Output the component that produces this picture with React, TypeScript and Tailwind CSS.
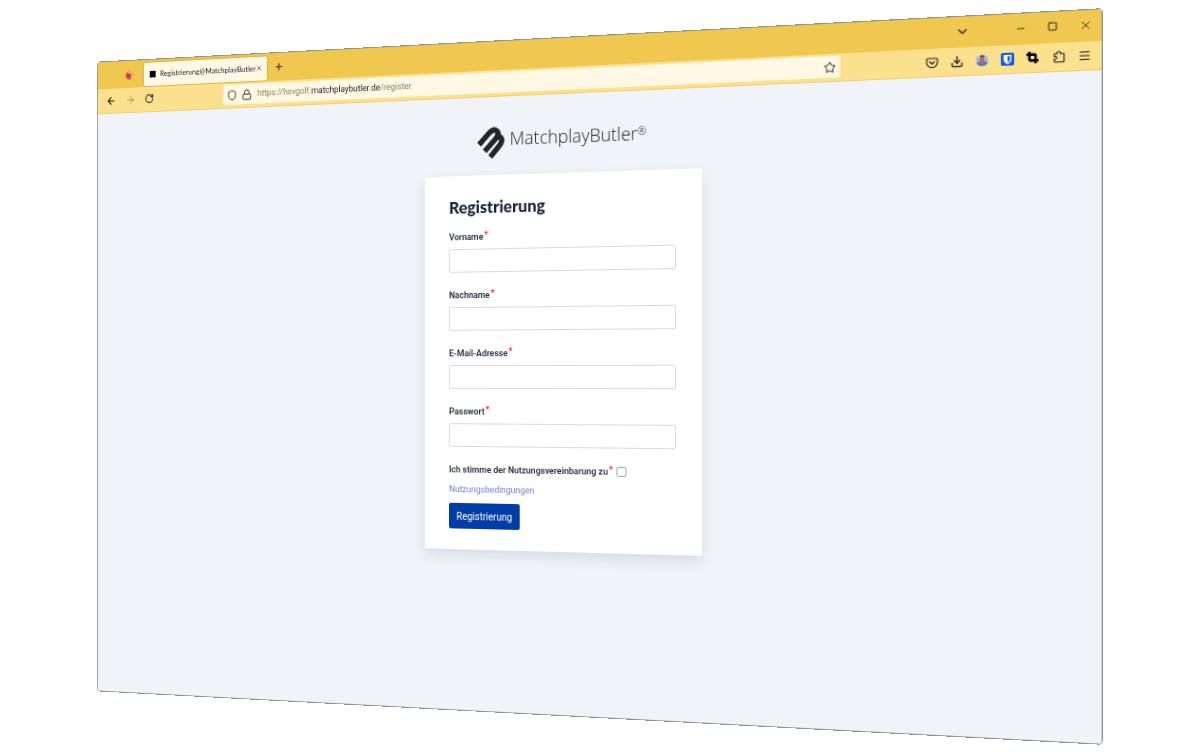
import { useState } from "react"
import type { ReactNode } from "react"
import { ArrowLeft, ArrowRight, ChevronDown, Crop, Download, Lock, Menu, Minus, Plus, RotateCw, Shield, Square, Star, X } from "lucide-react"
import { clsx } from "clsx"

type IconButtonProps = {
  label: string
  className?: string
  children: ReactNode
}

function IconButton({ label, className, children }: IconButtonProps) {
  return (
    <button type="button" aria-label={label} className={clsx("flex items-center justify-center shrink-0", className)}>
      {children}
    </button>
  )
}

function FirefoxIcon() {
  return (
    <svg viewBox="0 0 16 16" className="w-[10px] h-[10px]">
      <circle cx="8" cy="9" r="7" fill="#f5392f" />
      <path d="M3 4 C6 2 8 3 8 0 C12 2 15 5 15 9 C15 12 13 15 9 16 C12 11 10 6 3 4Z" fill="#ffb52e" />
      <path d="M1 8 C2 14 8 17 12 14 C8 15 5 13 4 9Z" fill="#f0307c" />
      <circle cx="8" cy="9" r="3" fill="#6a45d8" />
    </svg>
  )
}

function PocketIcon() {
  return (
    <svg viewBox="0 0 24 24" className="w-3 h-3" fill="none" stroke="currentColor" strokeWidth="2.2" strokeLinecap="round" strokeLinejoin="round">
      <path d="M4 4h16a2 2 0 0 1 2 2v5a10 10 0 0 1-20 0V6a2 2 0 0 1 2-2z" />
      <path d="M7.500 10l4.500 4.500L16.500 10" />
    </svg>
  )
}

function PuzzleIcon() {
  return (
    <svg viewBox="0 0 24 24" className="w-3 h-3" fill="none" stroke="currentColor" strokeWidth="2.2" strokeLinejoin="round">
      <path d="M9 6V5a3 3 0 0 1 6 0v1h5a1.500 1.500 0 0 1 1.500 1.500V20a1.500 1.500 0 0 1-1.500 1.500H5.500A1.500 1.500 0 0 1 4 20v-4h2a2.500 2.500 0 0 0 0-5H4V7.500A1.500 1.500 0 0 1 5.500 6z" />
    </svg>
  )
}

function AvatarIcon() {
  return (
    <svg viewBox="0 0 24 24" className="w-3 h-3">
      <circle cx="12" cy="12" r="11" fill="#9db7dc" />
      <path d="M2 17 C4 13 20 13 22 17 C19 24 5 24 2 17Z" fill="#4f78c4" />
      <path d="M8 8a4 4 0 0 1 8 0v5c0 4-2 6-4 7-2-1-4-3-4-7z" fill="#b56d5a" />
      <path d="M8 6a4 4 0 0 1 8 0z" fill="#6d4238" />
    </svg>
  )
}

function BitwardenIcon() {
  return (
    <svg viewBox="0 0 24 24" className="w-3 h-3">
      <rect x="0" y="0" width="24" height="24" rx="3" fill="#175ddc" />
      <path d="M5 4h14v8c0 4-3 7-7 9-4-2-7-5-7-9z" fill="#fff" />
      <path d="M12 6.500h4.500V12c0 3-2 4.500-4.500 6z" fill="#175ddc" />
    </svg>
  )
}

function ButlerMark() {
  return (
    <svg viewBox="0 0 83 92" className="w-[29px] h-8" fill="none" stroke="#20262b" strokeWidth="16" strokeLinejoin="round">
      <path d="M6 51 L35 20 C44 10 53 7 60 13 C67 20 64 27 57 35 L23 71" />
      <path d="M58 34 C65 27 72 30 74 36 C77 43 73 50 66 58 L40 88" />
    </svg>
  )
}

function TitleBar() {
  return (
    <div className="flex items-center h-[29px] bg-[#f0c850]">
      <div className="flex items-center justify-end w-[55px] pr-3">
        <FirefoxIcon />
      </div>
      <div className="flex items-center w-[143px] h-[25px] mt-px pl-[7px] pr-2 bg-[#fff8e4] rounded-xs shadow-[0_0_2px_#a07c1c]">
        <span className="w-[7px] h-[7px] mr-[5px] bg-black shrink-0" />
        <span className="flex-1 font-['Lato',sans-serif] text-[8px] text-[#1c1830] whitespace-nowrap">
          Registrierung@MatchplayButler
        </span>
        <IconButton label="Tab schließen">
          <X className="w-2 h-2" />
        </IconButton>
      </div>
      <IconButton label="Neuer Tab" className="w-[26px]">
        <Plus className="w-[11px] h-[11px]" strokeWidth={2.5} />
      </IconButton>
      <div className="flex items-center ml-auto pb-[2px]">
        <IconButton label="Alle Tabs auflisten" className="w-[29px] mr-6">
          <ChevronDown className="w-[14px] h-[14px]" />
        </IconButton>
        <IconButton label="Minimieren" className="w-[29px]">
          <Minus className="w-[10px] h-[10px]" />
        </IconButton>
        <IconButton label="Maximieren" className="w-[29px]">
          <Square className="w-[9px] h-[9px]" strokeWidth={2.5} />
        </IconButton>
        <IconButton label="Schließen" className="w-[29px]">
          <X className="w-3 h-3" strokeWidth={1.5} />
        </IconButton>
      </div>
    </div>
  )
}

function ToolBar() {
  return (
    <div className="flex items-center h-[27px] pl-1 pr-1 pb-px bg-[#fbe08e] border-b border-[#f3cf68]">
      <IconButton label="Zurück" className="w-[23px]">
        <ArrowLeft className="w-3 h-3" strokeWidth={2.5} />
      </IconButton>
      <IconButton label="Vor" className="w-[23px] text-[#a08f5b]">
        <ArrowRight className="w-3 h-3" />
      </IconButton>
      <IconButton label="Neu laden" className="w-[23px]">
        <RotateCw className="w-[11px] h-[11px]" strokeWidth={2.5} />
      </IconButton>
      <div className="flex items-center flex-1 h-[21px] ml-[75px] mr-[74px] px-1 bg-[#fff8e4] rounded-xs">
        <Shield className="w-3 h-3 mr-[5px]" />
        <Lock className="w-3 h-3 mr-[6px]" />
        <span className="flex-1 font-['Roboto',sans-serif] text-[9px] text-[#87815f] whitespace-nowrap">
          https://hsvgolf.<span className="text-[#1c1b18]">matchplaybutler.de</span>/register
        </span>
        <IconButton label="Lesezeichen hinzufügen">
          <Star className="w-3 h-3" />
        </IconButton>
      </div>
      <IconButton label="Pocket" className="w-[23px]">
        <PocketIcon />
      </IconButton>
      <IconButton label="Downloads" className="w-[23px]">
        <Download className="w-3 h-3" strokeWidth={2.5} />
      </IconButton>
      <IconButton label="Konto" className="w-[23px]">
        <AvatarIcon />
      </IconButton>
      <IconButton label="Bitwarden" className="w-[23px]">
        <BitwardenIcon />
      </IconButton>
      <IconButton label="Bildschirmfoto" className="w-[23px] text-black">
        <Crop className="w-[11px] h-[11px]" strokeWidth={5} />
      </IconButton>
      <IconButton label="Erweiterungen" className="w-[23px]">
        <PuzzleIcon />
      </IconButton>
      <IconButton label="Menü" className="w-[23px]">
        <Menu className="w-3 h-3" />
      </IconButton>
    </div>
  )
}

function Required() {
  return <span className="relative -top-[2px] ml-px text-[#e02424]">*</span>
}

const FIELDS = [
  { id: "firstname", label: "Vorname", type: "text" },
  { id: "lastname", label: "Nachname", type: "text" },
  { id: "email", label: "E-Mail-Adresse", type: "email" },
  { id: "password", label: "Passwort", type: "password" },
]

function RegisterForm() {
  const [values, setValues] = useState<Record<string, string>>({})
  const [accepted, setAccepted] = useState(false)

  return (
    <form
      onSubmit={(e) => e.preventDefault()}
      className="w-[287px] px-[26px] pt-5 pb-[21px] bg-white rounded-xs shadow-[0_6px_14px_rgba(30,50,90,0.12)]"
    >
      <h1 className="mb-[10px] font-['Lato',sans-serif] text-[17px] leading-6 font-black text-[#1a2036]">Registrierung</h1>

      <div className="flex flex-col gap-[15px]">
        {FIELDS.map((field) => (
          <div key={field.id}>
            <label htmlFor={field.id} className="block mb-1 leading-4 font-semibold">
              {field.label}
              <Required />
            </label>
            <input
              id={field.id}
              type={field.type}
              value={values[field.id] ?? ""}
              onChange={(e) => setValues({ ...values, [field.id]: e.target.value })}
              className="block w-full h-6 px-2 bg-white border border-[#d5dbe2] rounded-xs"
            />
          </div>
        ))}

        {/* Terms */}
        <div className="flex items-center h-4">
          <label htmlFor="terms" className="leading-4 font-semibold">
            Ich stimme der Nutzungsvereinbarung zu
            <Required />
          </label>
          <input
            id="terms"
            type="checkbox"
            checked={accepted}
            onChange={(e) => setAccepted(e.target.checked)}
            className="appearance-none w-[10px] h-[10px] ml-1 bg-white border border-[#98a5b8] rounded-xs checked:bg-[#003da6]"
          />
        </div>
      </div>

      <a href="#nutzungsbedingungen" className="block mt-1 mb-[6px] leading-4 text-[#6c7bdb]">
        Nutzungsbedingungen
      </a>
      <button type="submit" className="h-[26px] px-2 text-[10px] text-white bg-[#003da6] rounded-xs">
        Registrierung
      </button>
    </form>
  )
}

export default function App() {
  return (
    <div className="flex flex-col min-h-screen pt-[37px] pb-9 pl-[43px] pr-[122px] bg-white overflow-hidden">
      <div className="flex flex-1 perspective-[1711px]">
        <div className="flex flex-col flex-1 -rotate-y-15 border border-[#8f9296] rounded-sm overflow-hidden text-[#2b2a20]">
          <TitleBar />
          <ToolBar />
          <main className="flex flex-col flex-1 items-center pt-[30px] bg-[#f0f4f9] font-['Roboto',sans-serif] text-[9px] text-[#1f2a3c]">
            <div className="flex items-start gap-[6px] mb-[17px] text-[#20262b]">
              <ButlerMark />
              <span className="font-['Open_Sans',sans-serif] text-[18px] leading-6 font-light">
                MatchplayButler<sup className="text-[11px]">®</sup>
              </span>
            </div>
            <RegisterForm />
          </main>
        </div>
      </div>
    </div>
  )
}
